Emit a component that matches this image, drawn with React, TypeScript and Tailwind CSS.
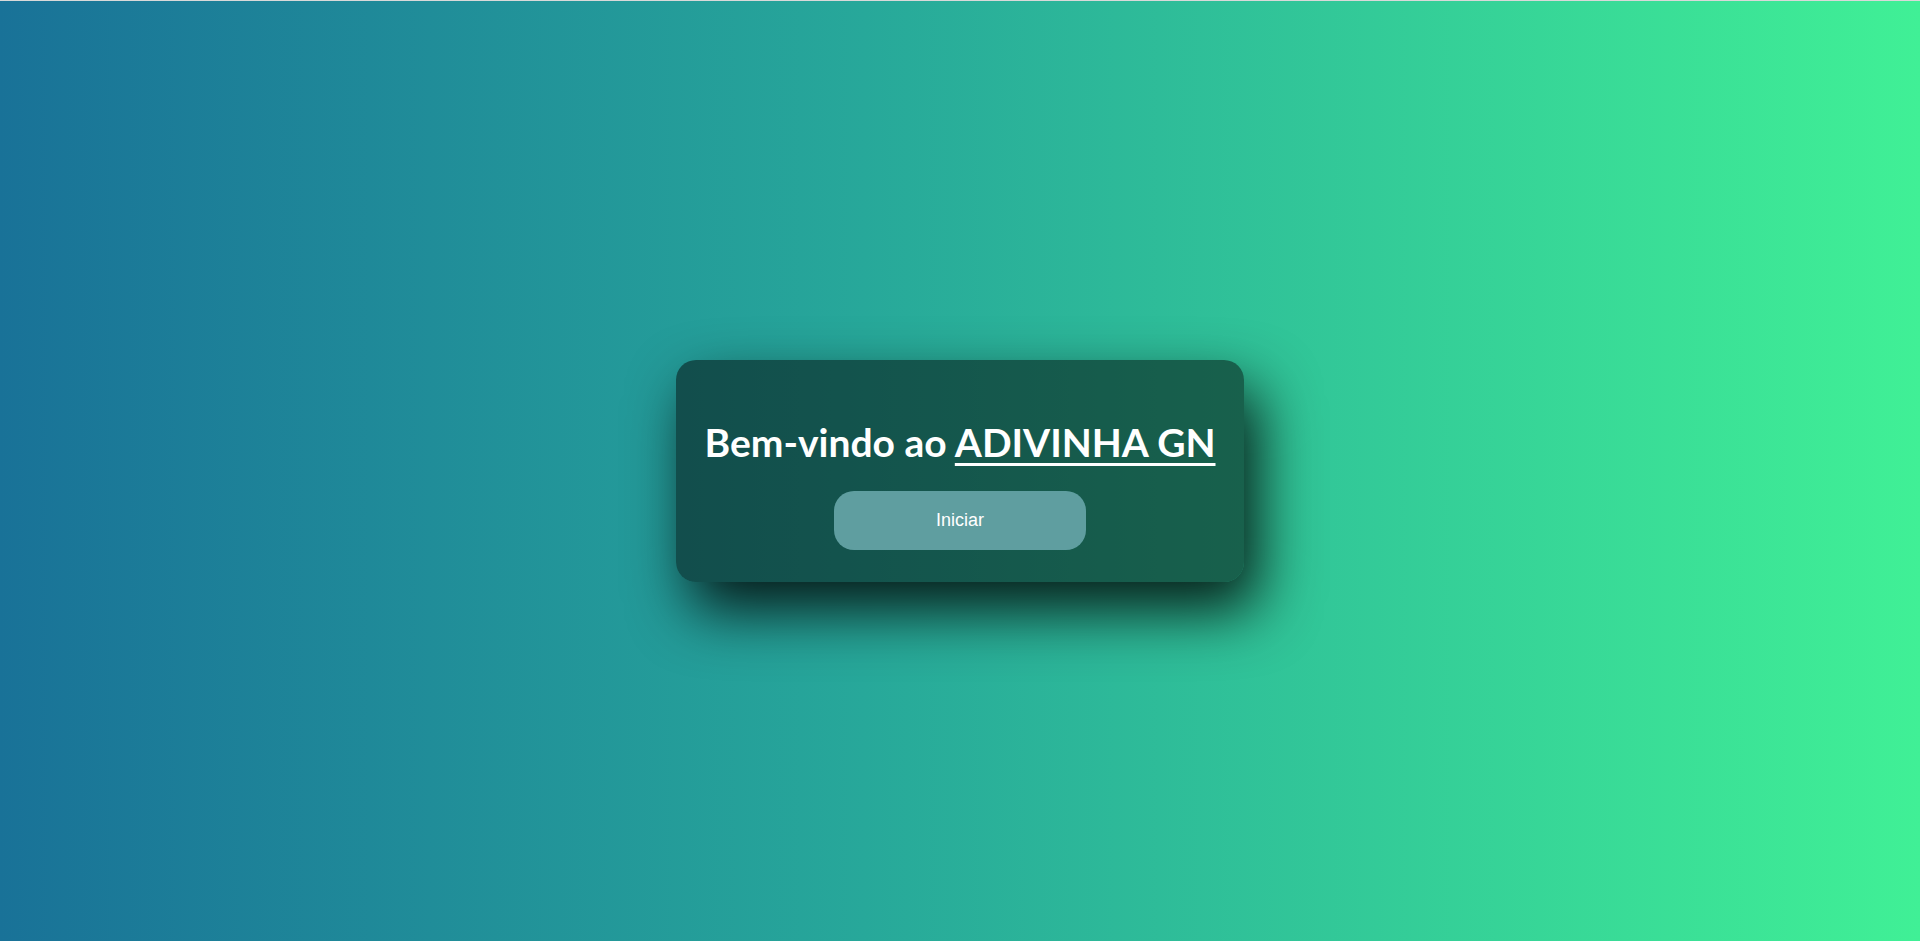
export default function App() {
  return (
    <div className="min-h-screen w-full flex flex-col">
      <div className="h-px w-full bg-[#d9d9d9]" />
      <main className="flex-1 flex items-center justify-center bg-[linear-gradient(to_right,#197298,#27a89a_45%,#40f096)]">
        <div className="w-[568px] h-[222px] flex flex-col items-center rounded-[20px] bg-black/50 pt-[58px] shadow-[14px_28px_60px_rgba(0,0,0,0.85)]">
          <h1 className="text-white font-bold text-[39px] leading-[48px] font-['Trebuchet_MS','Lato',sans-serif]">
            Bem-vindo ao{" "}
            <span className="underline decoration-[3px] underline-offset-[6px]">ADIVINHA GN</span>
          </h1>
          <button className="mt-[25px] w-[252px] h-[59px] rounded-[20px] bg-[#5f9ea0] text-white text-[18px] font-['Liberation_Sans',Arial,sans-serif]">
            Iniciar
          </button>
        </div>
      </main>
    </div>
  )
}
